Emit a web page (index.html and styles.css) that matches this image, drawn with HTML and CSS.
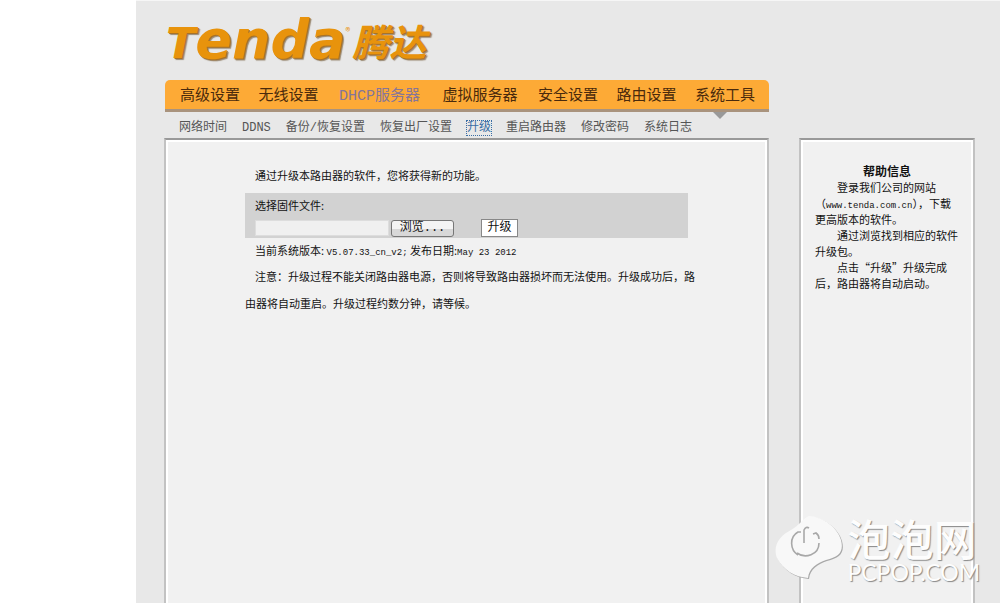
FILE: index.html
```html
<!DOCTYPE html>
<html lang="zh-CN">
<head>
  <meta charset="UTF-8" />
  <meta name="viewport" content="width=device-width, initial-scale=1.0" />
  <title>Tenda 腾达</title>
  <link rel="stylesheet" href="styles.css">
</head>
<body>
  <div class="page">
    <header>
      <div class="logo">
        <span class="logo-en"><span class="logo-t">T</span>enda</span>
        <span class="logo-reg">®</span>
        <span class="logo-cn">腾达</span>
      </div>
      <nav class="menu">
        <a href="#">高级设置</a>
        <a href="#">无线设置</a>
        <a href="#" class="wide visited">DHCP服务器</a>
        <a href="#" class="wide">虚拟服务器</a>
        <a href="#">安全设置</a>
        <a href="#">路由设置</a>
        <a href="#" class="current">系统工具</a>
      </nav>
      <nav class="submenu">
        <a href="#">网络时间</a>
        <a href="#">DDNS</a>
        <a href="#">备份/恢复设置</a>
        <a href="#">恢复出厂设置</a>
        <a href="#" class="current">升级</a>
        <a href="#">重启路由器</a>
        <a href="#">修改密码</a>
        <a href="#">系统日志</a>
      </nav>
    </header>

    <main class="panel">
      <form class="upgrade">
        <p>通过升级本路由器的软件，您将获得新的功能。</p>
        <div class="file-box">
          <label for="firmware">选择固件文件:</label>
          <div class="file-row">
            <input type="text" id="firmware" />
            <button type="button" class="browse">浏览...</button>
            <button type="submit" class="submit">升级</button>
          </div>
        </div>
        <p class="version">当前系统版本: <span class="code">V5.07.33_cn_v2;</span> 发布日期:<span class="code">May 23 2012</span></p>
        <p class="note">注意：升级过程不能关闭路由器电源，否则将导致路由器损坏而无法使用。升级成功后，路<br>由器将自动重启。升级过程约数分钟，请等候。</p>
      </form>
    </main>

    <aside class="panel help">
      <h2>帮助信息</h2>
      <p>登录我们公司的网站<br>（<span class="code">www.tenda.com.cn</span>），下载更高版本的软件。</p>
      <p>通过浏览找到相应的软件升级包。</p>
      <p>点击“升级”升级完成<br>后，路由器将自动启动。</p>
    </aside>
  </div>

  <div class="watermark">
    <svg width="70" height="68" viewBox="0 0 70 68">
      <path class="mark-shadow" d="M34 0C50 1 63 13 66 24C69 36 64 41 51 44C42 47 34 52 33 62C20 61 8 54 2 42C-3 29 6 19 16 14C24 10 27 3 34 0Z" transform="translate(1 1)" />
      <path class="mark" d="M34 0C50 1 63 13 66 24C69 36 64 41 51 44C42 47 34 52 33 62C20 61 8 54 2 42C-3 29 6 19 16 14C24 10 27 3 34 0Z" />
      <path class="power-edge" d="M26 16H23C14 21 15 34 23 39M22 37C30 43 44 39 44 27M38 18L41 17Q44 19 44 23M29 27V14Q31 10 34 12" />
    </svg>
    <div class="mark-text">
      <span class="mark-cn">泡泡网</span>
      <span class="mark-en">PCPOP.COM</span>
    </div>
  </div>
</body>
</html>
```
FILE: styles.css
```css
* {
  box-sizing: border-box;
}
body {
  margin: 0;
  background-color: #fff;
  color: #111;
  font-family: "Noto Sans CJK SC", sans-serif;
  font-size: 11px;
  line-height: 16px;
  position: relative;
  overflow: hidden;
}
p, h2 {
  margin: 0;
}
a {
  text-decoration: none;
}
.page {
  display: grid;
  grid-template-columns: 1fr 176px;
  grid-template-rows: auto 1fr;
  column-gap: 30px;
  min-height: 100vh;
  margin-left: 136px;
  padding: 0 25px 0 28px;
  background-color: #e8e8e8;
  border-top: 1px solid #f6f6f6;
}
header {
  grid-column: 1;
}

/* logo */
.logo {
  display: flex;
  height: 79px;
  padding: 9px 0 0 2px;
  color: #e8930c;
  text-shadow: 1px 1px 0 #a87226, 2px 2px 1px #9a8a74;
}
.logo-en {
  font: italic 700 54px/60px "DejaVu Sans", sans-serif;
}
.logo-t {
  font-size: 43px;
}
.logo-reg {
  padding-top: 15px;
  font-size: 10px;
  line-height: 12px;
  text-shadow: none;
}
.logo-cn {
  margin-left: 2px;
  padding-top: 8px;
  font-size: 37px;
  font-style: italic;
  font-weight: 700;
  line-height: 44px;
}

/* menus */
.menu {
  display: flex;
  justify-content: space-between;
  height: 32px;
  margin-left: 1px;
  padding: 2px 14px 0 15px;
  background-color: #fdaa36;
  border-bottom: 3px solid #a9937d;
  border-radius: 5px 5px 0 0;
  font-family: "Liberation Mono", "Noto Sans CJK SC", monospace;
  font-size: 15px;
  line-height: 30px;
}
.menu a {
  position: relative;
  color: #4a2a0c;
}
.menu .wide {
  margin: 0 2px;
}
.menu .visited {
  color: #85759a;
}
.menu .current::after {
  content: "";
  position: absolute;
  top: 30px;
  left: 18px;
  border: 7px solid transparent;
  border-top-color: #999;
  border-bottom: 0;
}
.submenu {
  display: flex;
  gap: 15px;
  height: 26px;
  padding: 9px 0 0 15px;
  font-family: "Liberation Mono", "Noto Sans CJK SC", monospace;
  font-size: 12px;
  line-height: 15px;
  white-space: nowrap;
}
.submenu a {
  height: 14px;
  color: #555;
}
.submenu .current {
  color: #3a6ea5;
  outline: 1px dotted #3a6ea5;
}

/* panels */
.panel {
  grid-row: 2;
  border: 2px solid #c2c2c2;
  border-top-color: #999;
  border-bottom: 0;
  background-color: #f1f1f1;
  box-shadow: inset 2px 2px 0 #fff, inset -2px 0 0 #fff;
}
.upgrade {
  max-width: 443px;
  margin: 27px 0 0 79px;
}
.upgrade p {
  padding-left: 10px;
  white-space: nowrap;
}
.file-box {
  height: 45px;
  margin-top: 10px;
  padding: 4px 10px 0;
  background-color: #d2d2d2;
}
.file-box label {
  display: block;
}
.file-row {
  display: flex;
  align-items: center;
  margin-top: 6px;
}
.file-row input {
  width: 134px;
  height: 16px;
  border: 1px solid #ddd;
  background-color: #f0f0f0;
}
button {
  padding: 0;
  color: #111;
  font: 12px/14px "Liberation Mono", "Noto Sans CJK SC", monospace;
}
.browse {
  width: 63px;
  height: 17px;
  margin-left: 2px;
  border: 1px solid #777;
  border-radius: 3px;
  background: linear-gradient(#f4f4f4 50%, #d8d8d8 50%);
}
.submit {
  width: 37px;
  height: 18px;
  margin-left: 27px;
  border: 1px solid #888;
  background-color: #fff;
}
.code {
  font-family: "Liberation Mono", monospace;
  font-size: 9px;
  line-height: 10px;
}
.upgrade .version {
  margin-top: 4px;
}
.upgrade .note {
  margin-top: 5px;
  padding-left: 0;
  text-indent: 10px;
  line-height: 27px;
}

.help {
  padding: 23px 14px 0;
}
.help h2 {
  font-size: 12px;
  line-height: 16px;
  text-align: center;
}
.help p {
  text-indent: 22px;
}

/* watermark over the bottom right corner */
.watermark {
  position: absolute;
  right: 20px;
  bottom: 18px;
  display: flex;
  gap: 2px;
}
.mark {
  fill: #f8f8f8;
}
.mark-shadow {
  fill: #a8a8a8;
}
.power-edge {
  fill: none;
  stroke: #a8a8a8;
  stroke-width: 1.6;
}
.mark-text {
  display: flex;
  flex-direction: column;
  color: #fdfdfd;
  text-shadow: 1px 1px 1px #888;
}
.mark-cn {
  font-size: 43px;
  font-weight: 500;
  line-height: 43px;
}
.mark-en {
  font-family: Lato, sans-serif;
  font-size: 23px;
  line-height: 26px;
}
```
